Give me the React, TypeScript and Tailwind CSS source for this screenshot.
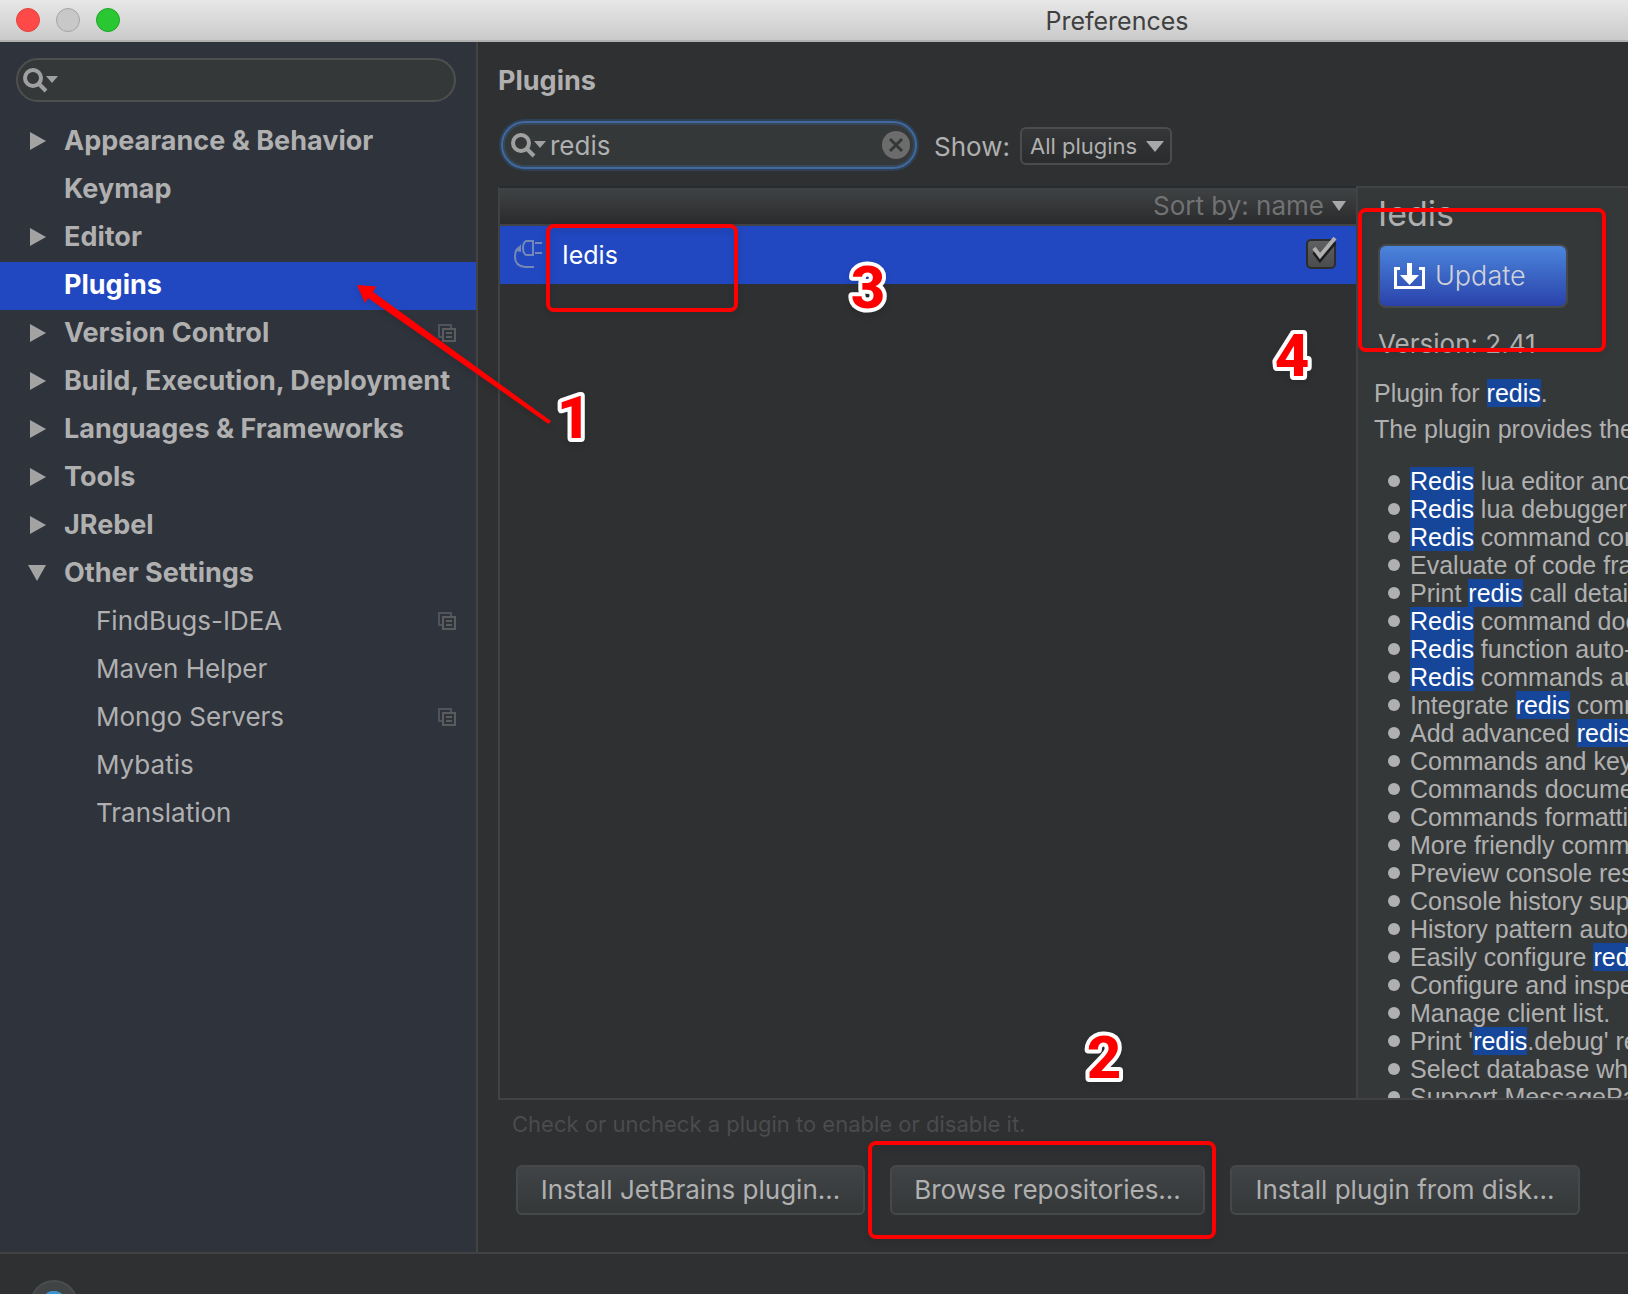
import { useState } from 'react';

type TreeItem = { label: string; state?: 'closed' | 'open'; child?: boolean; project?: boolean };

const tree: TreeItem[] = [
  { label: 'Appearance & Behavior', state: 'closed' },
  { label: 'Keymap' },
  { label: 'Editor', state: 'closed' },
  { label: 'Plugins' },
  { label: 'Version Control', state: 'closed', project: true },
  { label: 'Build, Execution, Deployment', state: 'closed' },
  { label: 'Languages & Frameworks', state: 'closed' },
  { label: 'Tools', state: 'closed' },
  { label: 'JRebel', state: 'closed' },
  { label: 'Other Settings', state: 'open' },
  { label: 'FindBugs-IDEA', child: true, project: true },
  { label: 'Maven Helper', child: true },
  { label: 'Mongo Servers', child: true, project: true },
  { label: 'Mybatis', child: true },
  { label: 'Translation', child: true },
];

const features = [
  'Redis lua editor and',
  'Redis lua debugger',
  'Redis command console',
  'Evaluate of code fragments',
  'Print redis call details',
  'Redis command documentation',
  'Redis function auto-completion',
  'Redis commands autocomplete',
  'Integrate redis commands',
  'Add advanced redis',
  'Commands and keys',
  'Commands documentation',
  'Commands formatting',
  'More friendly command',
  'Preview console results',
  'Console history support',
  'History pattern autocomplete',
  'Easily configure redis',
  'Configure and inspect',
  'Manage client list.',
  "Print 'redis.debug' result",
  'Select database when',
  'Support MessagePack',
];

function Highlight({ text }: { text: string }) {
  return (
    <>
      {text.split(/(redis)/i).map((part, i) =>
        /^redis$/i.test(part) ? <mark key={i} className="inline-block h-7 bg-[#15469a] text-white">{part}</mark> : part
      )}
    </>
  );
}

function SearchIcon() {
  return (
    <svg className="shrink-0" width="36" height="26" viewBox="0 0 36 26" aria-hidden="true">
      <circle cx="11" cy="11" r="8" fill="none" stroke="#a0a0a0" strokeWidth="4" />
      <path d="M17 17l7 7" stroke="#a0a0a0" strokeWidth="4" />
      <path d="M24 9h12l-6 7z" fill="#a0a0a0" />
    </svg>
  );
}

function ProjectIcon() {
  return (
    <svg width="18" height="18" viewBox="0 0 18 18" fill="none" strokeWidth="2" aria-hidden="true">
      <path d="M4 13H1V1h12v3" stroke="#4a555f" />
      <path d="M5 5h12v12H5zM8 9h6M8 13h6" stroke="#595b5d" />
    </svg>
  );
}

function PlugIcon() {
  return (
    <svg className="shrink-0" width="28" height="29" viewBox="0 0 28 29" fill="none" stroke="#7388b4" strokeWidth="2" aria-hidden="true">
      <path d="M19 1h-7Q9 3 9 8t3 7h7zM21 3h7M21 13h7M20 27h-9Q1 26 1 17 1 9 6 7" />
      <path d="M2 11l5-7v8z" fill="#7388b4" stroke="none" />
    </svg>
  );
}

function Frame({ className }: { className: string }) {
  return <div className={`pointer-events-none absolute z-10 rounded-lg border-4 border-[#ff0000] drop-shadow-md ${className}`} />;
}

// outlined marker number, drawn with rounded stroke corners
function Step({ n, className }: { n: number; className: string }) {
  return (
    <svg className={`pointer-events-none absolute z-10 drop-shadow-md ${className}`} width="60" height="80" viewBox="0 0 60 80">
      <text x="30" y="61" textAnchor="middle" className="font-[Roboto,sans-serif] text-[60px] font-extrabold" fill="#ff0000" stroke="#fff" strokeWidth="8" strokeLinejoin="round" paintOrder="stroke">
        {n}
      </text>
    </svg>
  );
}

function Sidebar() {
  const [selected, setSelected] = useState('Plugins');

  return (
    <aside className="relative w-[478px] shrink-0 border-r-2 border-[#434343] bg-[#2f333c] pt-4">
      <label className="mx-4 mr-5 flex h-11 items-center rounded-full border-2 border-[#4e4f4f] bg-[#353838] pl-1">
        <SearchIcon />
        <input className="w-full bg-transparent pr-4 pl-1 outline-none" aria-label="Search settings" />
      </label>
      <ul className="mt-4">
        {tree.map((item) => (
          <li key={item.label}>
            <button
              onClick={() => setSelected(item.label)}
              className={`flex h-12 w-full items-center pr-5 pb-0.5 text-left ${item.child ? 'pl-24' : 'pl-7 text-[27px] font-bold'} ${item.label === selected ? 'bg-[#2148c1] text-white' : ''}`}
            >
              {!item.child && (
                <span className="w-9 shrink-0">
                  {item.state && (
                    <svg width="20" height="18" viewBox="0 0 20 18" fill="#a3a3a3" aria-hidden="true">
                      <path d={item.state === 'open' ? 'M0 1h18L9 17z' : 'M2 0l16 9-16 9z'} />
                    </svg>
                  )}
                </span>
              )}
              <span className="flex-1 whitespace-nowrap">{item.label}</span>
              {item.project && <ProjectIcon />}
            </button>
          </li>
        ))}
      </ul>
      <svg className="pointer-events-none absolute top-[238px] left-[350px] z-10 drop-shadow-md" width="206" height="150" viewBox="350 280 206 150" aria-hidden="true">
        <path d="M357 285l19 1.500-3 5.500 178 129-2.500 3L368 298l-3 5z" fill="#ff0000" />
      </svg>
      <Step n={1} className="top-[335px] left-[544px]" />
    </aside>
  );
}

function PluginTable() {
  const [enabled, setEnabled] = useState(true);

  return (
    <div className="relative min-w-0 flex-1 border-2 border-r-0 border-[#404243] border-t-[#292a2b]">
      <div className="flex h-[38px] items-center justify-end border-b-2 border-[#404243] bg-linear-to-b from-[#404345] to-[#2a2b2c] pr-2.5">
        <button className="flex items-center gap-2 text-[#717274]">
          Sort by: name
          <svg width="14" height="10" viewBox="0 0 14 10" fill="#a8a8a8" aria-hidden="true"><path d="M0 0h14L7 10z" /></svg>
        </button>
      </div>
      <div className="relative flex h-[58px] items-center bg-[#2148c1] pr-5 pb-0.5 pl-3.5 text-white">
        <PlugIcon />
        <span className="ml-5 flex-1 pt-0.5 text-[25px]">Iedis</span>
        <span className="relative size-[30px]">
          <input
            type="checkbox"
            aria-label="Enable Iedis"
            checked={enabled}
            onChange={(e) => setEnabled(e.target.checked)}
            className="block size-[30px] appearance-none rounded-[5px] border-2 border-[#2b2c2e] bg-linear-to-b from-[#5f6061] to-[#4b4c4d]"
          />
          {enabled && (
            <svg className="pointer-events-none absolute -top-1 left-1.5" width="26" height="30" viewBox="0 0 26 30" fill="none" strokeWidth="4" aria-hidden="true">
              <path d="M2 17l6 8L23 7" stroke="#1d1d1d" />
              <path d="M2 13l6 8L23 3" stroke="#b0b0b0" />
            </svg>
          )}
        </span>
        <Frame className="-top-0.5 left-[46px] h-[88px] w-48" />
        <Step n={3} className="top-[21px] left-[338px]" />
      </div>
      <Step n={4} className="top-[127px] right-[34px]" />
      <Step n={2} className="right-[222px] bottom-px" />
    </div>
  );
}

function Details() {
  return (
    <section className="relative w-[272px] shrink-0 overflow-hidden border-y-2 border-l-2 border-[#404243] bg-[#353839] whitespace-nowrap">
      <div className="flex h-[166px] flex-col items-start overflow-hidden pl-5">
        <h2 className="mt-1.5 text-[34px] leading-[40px]">Iedis</h2>
        <button className="mt-2.5 flex h-16 w-[190px] shrink-0 items-center gap-2.5 rounded-lg border-2 border-[#46494c] bg-linear-to-b from-[#4c85dc] to-[#2b42ab] pl-3.5 text-[27px] font-light text-[#d0d3da]">
          <svg width="31" height="26" viewBox="0 0 31 26" aria-hidden="true">
            <path d="M6 5.500H1.500v19h28v-19H25" fill="none" stroke="#fff" strokeWidth="3" />
            <path d="M13 0h5v12h7l-9.500 10L6 12h7z" fill="#fff" />
          </svg>
          Update
        </button>
        <p className="mt-5">Version: 2.41</p>
      </div>
      <Frame className="top-5 left-0 h-36 w-[248px]" />
      <div className="pl-4 font-['Liberation_Sans',Arial,sans-serif] text-[25px] leading-7">
        <p className="mt-[25px]"><Highlight text="Plugin for redis." /></p>
        <p className="mt-2">The plugin provides the</p>
        <ul className="mt-6">
          {features.map((feature) => (
            <li key={feature} className="flex h-7 items-center pl-3.5">
              <span className="mr-2.5 size-3 shrink-0 rounded-full bg-[#b0b0b0]" />
              <span><Highlight text={feature} /></span>
            </li>
          ))}
        </ul>
      </div>
    </section>
  );
}

const actionClass = 'h-[50px] rounded-md border-2 border-[#464849] bg-linear-to-b from-[#414446] to-[#353839] whitespace-nowrap';

export default function App() {
  const [query, setQuery] = useState('redis');

  return (
    <div className="flex h-screen flex-col overflow-hidden bg-[#2f3031] font-[Inter,sans-serif] text-[26px] leading-8 text-[#b0b0b0]">
      <header className="flex h-[42px] shrink-0 items-center border-b-2 border-[#b0b0b0] bg-linear-to-b from-[#e8e8e8] to-[#cacaca] pl-4 text-[#404040]">
        <div className="flex w-[590px] shrink-0 gap-4">
          <button aria-label="Close" className="size-6 rounded-full border border-[#e0443e] bg-[#fd4a48]" />
          <button aria-label="Minimize" className="size-6 rounded-full border border-[#a5a5a5] bg-[#c8c8c8]" />
          <button aria-label="Zoom" className="size-6 rounded-full border border-[#1fa52a] bg-[#29c732]" />
        </div>
        <h1 className="flex-1 pt-0.5 text-center text-[25px]">Preferences</h1>
      </header>

      <div className="flex min-h-0 flex-1">
        <Sidebar />
        <main className="flex min-w-0 flex-1 flex-col pl-5">
          <h2 className="mt-[23px] text-[27px] font-bold">Plugins</h2>
          <div className="mt-6 mb-[17px] flex h-12 items-center pl-[3px]">
            <label className="flex h-12 w-[416px] items-center rounded-full border-2 border-[#41699f] bg-[#353838] pr-[5px] pl-[7px] shadow-[0_0_0_2px_#2e4056,inset_0_0_0_2px_#35485a]">
              <SearchIcon />
              <input className="min-w-0 flex-1 bg-transparent pt-0.5 pl-1 outline-none" aria-label="Search plugins" value={query} onChange={(e) => setQuery(e.target.value)} />
              <button aria-label="Clear search" onClick={() => setQuery('')}>
                <svg width="28" height="28" viewBox="0 0 28 28" aria-hidden="true">
                  <circle cx="14" cy="14" r="14" fill="#6c6c6c" />
                  <path d="M8 8l12 12M20 8L8 20" stroke="#353838" strokeWidth="3" />
                </svg>
              </button>
            </label>
            <label htmlFor="show" className="ml-[17px] pt-1">Show:</label>
            <span className="relative ml-2.5 mt-0.5">
              <select id="show" className="block h-[38px] w-[152px] appearance-none rounded-md border-2 border-[#4a4c4d] bg-linear-to-b from-[#343637] to-[#2b2c2d] pl-2 text-[22px] leading-7 outline-none">
                <option>All plugins</option>
              </select>
              <svg className="pointer-events-none absolute top-3.5 right-2" width="18" height="11" viewBox="0 0 18 11" fill="#a8a8a8" aria-hidden="true"><path d="M0 0h18L9 11z" /></svg>
            </span>
          </div>
          <div className="flex min-h-0 flex-1">
            <PluginTable />
            <Details />
          </div>
          <p className="mt-2 pl-3.5 text-[22px] leading-8 text-[#4a4c4d]">Check or uncheck a plugin to enable or disable it.</p>
          <div className="mt-[25px] mb-[37px] flex gap-[25px] pl-[18px]">
            <button className={`w-[349px] ${actionClass}`}>Install JetBrains plugin...</button>
            <div className="relative">
              <button className={`w-[315px] ${actionClass}`}>Browse repositories...</button>
              <Frame className="-top-6 -right-[11px] -bottom-6 -left-[22px]" />
            </div>
            <button className={`w-[350px] ${actionClass}`}>Install plugin from disk...</button>
          </div>
        </main>
      </div>

      <footer className="h-[42px] shrink-0 overflow-hidden border-t-2 border-[#414243] pt-[26px] pl-[30px]">
        <button aria-label="Help" className="flex size-12 items-center justify-center rounded-full border-2 border-[#4a4d4e] bg-[#414445] text-[36px] leading-9 font-black text-[#3f94cc]">?</button>
      </footer>
    </div>
  );
}
